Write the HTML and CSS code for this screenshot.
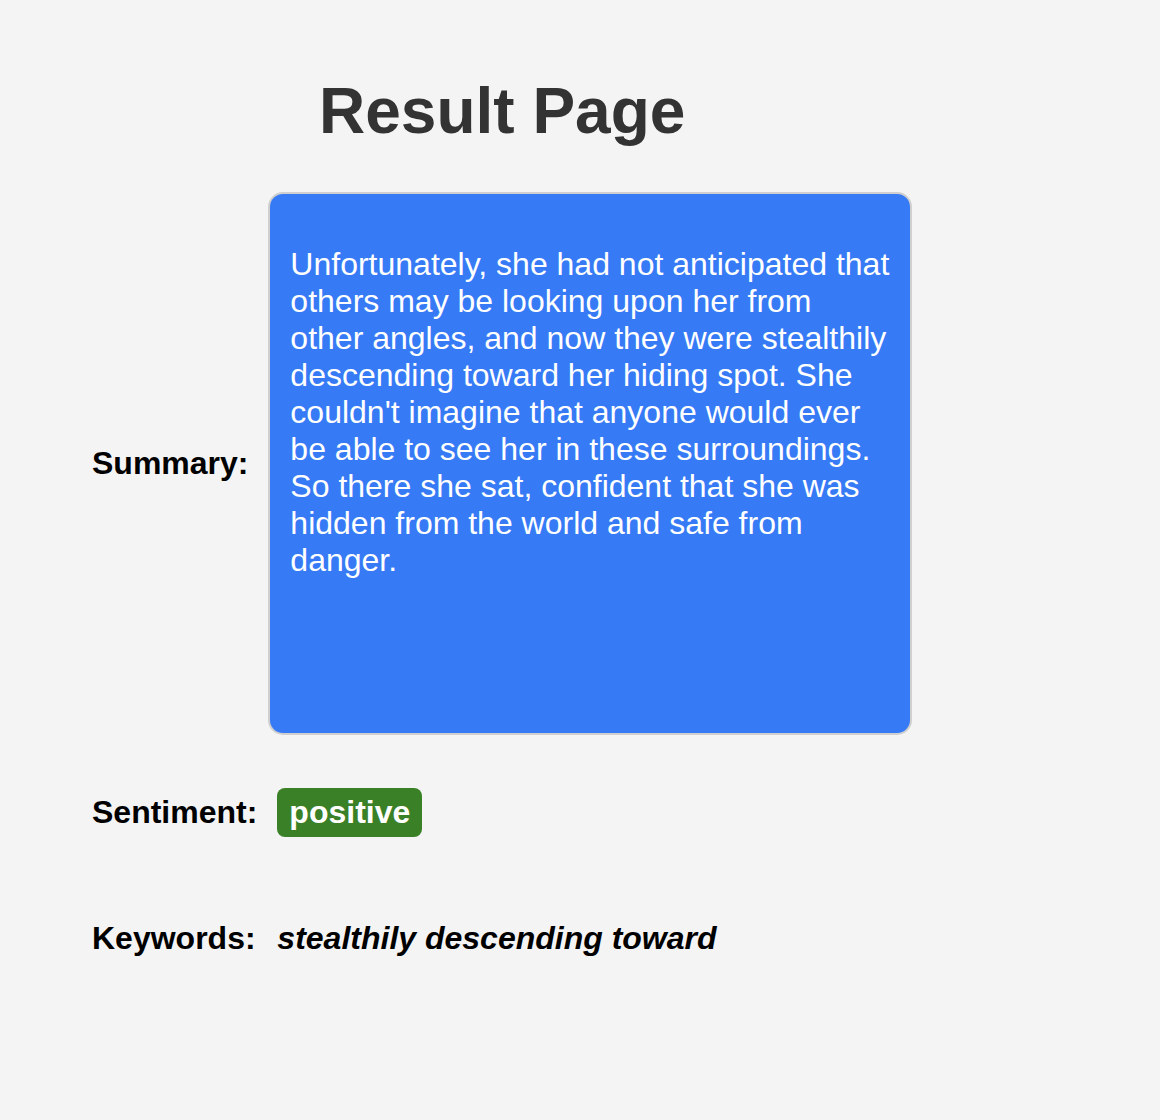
FILE: index.html
```html
<!DOCTYPE html>
<html lang="en">
<head>
<meta charset="utf-8">
<title>Result Page</title>
<link rel="stylesheet" href="styles.css">
</head>
<body>
<div class="page">
  <h1 class="title">Result Page</h1>
  <div class="results">
    <div class="label">Summary:</div>
    <div class="summary-box">
      <p class="summary-text">Unfortunately, she had not anticipated that others may be looking upon her from other angles, and now they were stealthily descending toward her hiding spot. She couldn't imagine that anyone would ever be able to see her in these surroundings. So there she sat, confident that she was hidden from the world and safe from danger.</p>
    </div>
    <div class="label row-sentiment">Sentiment:</div>
    <div class="value row-sentiment"><span class="badge">positive</span></div>
    <div class="label row-keywords">Keywords:</div>
    <div class="value row-keywords"><em class="keywords">stealthily descending toward</em></div>
  </div>
</div>
</body>
</html>
```

FILE: styles.css
```css
html, body {
  margin: 0;
  padding: 0;
  background: #f4f4f4;
}
body {
  font-family: "Liberation Sans", Arial, sans-serif;
  color: #000;
}
.page {
  width: fit-content;
  padding: 74px 0 0 92px;
}
.title {
  margin: 0;
  font-size: 64px;
  line-height: normal;
  font-weight: bold;
  color: #333;
  text-align: center;
}
.results {
  margin-top: 44px;
  display: grid;
  grid-template-columns: auto auto;
  column-gap: 11px;
  align-items: center;
  justify-items: start;
}
.label {
  font-size: 32px;
  font-weight: bold;
  line-height: normal;
}
.summary-box {
  box-sizing: border-box;
  width: 644px;
  height: 543px;
  padding: 20px;
  border: 2px solid #cfcfcf;
  border-radius: 15px;
  background: #367af6;
  color: #fff;
}
.summary-text {
  margin: 32px 0;
  font-size: 32px;
  line-height: normal;
}
.value {
  margin-left: 9px;
  font-size: 32px;
  line-height: normal;
}
.row-sentiment {
  margin-top: 53px;
}
.row-keywords {
  margin-top: 83px;
}
.badge {
  display: inline-block;
  padding: 6px 12px;
  border-radius: 8px;
  background: #3a8027;
  color: #fff;
  font-weight: bold;
}
.keywords {
  font-weight: bold;
  font-style: italic;
}
```
